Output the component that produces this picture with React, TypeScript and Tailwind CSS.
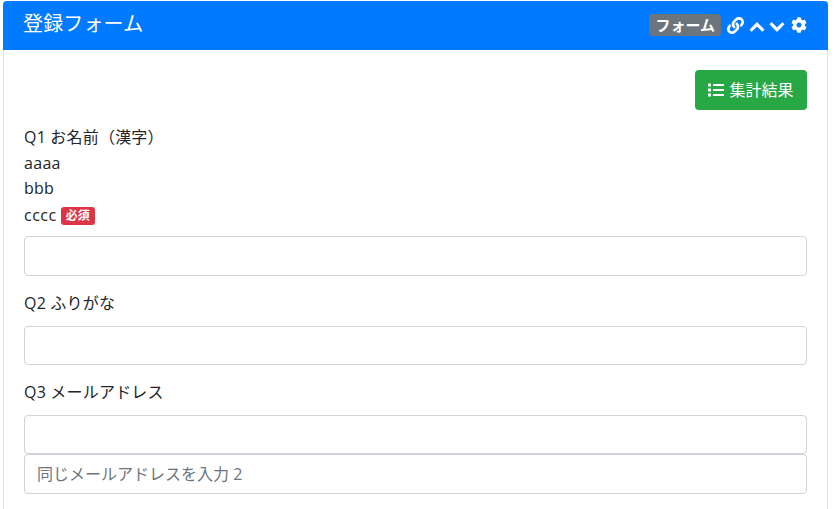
import { FaLink, FaChevronUp, FaChevronDown, FaCog, FaList } from "react-icons/fa";

const font = "font-['Open_Sans','Noto_Sans_CJK_JP',sans-serif]";
const inputCls =
  "block w-full rounded-[4px] border border-[#ced4da] bg-white px-3 text-[16px] text-[#495057] placeholder:text-[#6c757d] outline-none";

export default function App() {
  return (
    <div className={`${font} h-[509px] w-[836px] overflow-hidden bg-white pl-[3px] pt-[1px] text-[16px] text-[#212529]`}>
      <div className="h-[520px] w-[825px] rounded-t-[4px] border-x border-[#dfdfdf]">
        <div className="-mx-px flex h-[49px] items-center justify-between rounded-t-[4px] bg-[#007bff] pl-[20px] pr-[21px] text-white">
          <div className="pb-[3px] text-[20px] leading-[24px] tracking-[0.15px]">登録フォーム</div>
          <div className="flex items-center">
            <span className="mb-[2px] mr-[6px] rounded-[4px] bg-[#6c757d] px-[6px] py-[3px] text-[15px] font-bold leading-[16px]">フォーム</span>
            <FaLink size={17} className="mb-[1px] mr-[5px]" />
            <FaChevronUp size={16} stroke="currentColor" strokeWidth={30} className="mr-[4px] mt-[2px]" />
            <FaChevronDown size={16} stroke="currentColor" strokeWidth={30} className="mr-[6px] mt-[2px]" />
            <FaCog size={16} className="mb-[1px]" />
          </div>
        </div>
        <div className="px-[20px] pt-[20px]">
          <div className="flex justify-end">
            <button className="flex h-[40px] w-[112px] items-center justify-center gap-[5px] rounded-[4px] bg-[#28a745] text-white">
              <FaList size={16} />
              <span>集計結果</span>
            </button>
          </div>
          <div className="mt-[15px] leading-[25px] tracking-[0.2px]">
            <div className="h-[26px]">Q1 お名前（漢字）</div>
            <div className="tracking-[0.3px]">aaaa</div>
            <div>bbb</div>
            <div className="flex h-[27px] items-center pt-[2px] tracking-[0.5px]">
              cccc
              <span className="ml-[4px] rounded-[3px] bg-[#dc3545] px-[5px] py-[2px] text-[12px] font-bold leading-[14px] tracking-normal text-white">必須</span>
            </div>
          </div>
          <input className={`${inputCls} mt-[8px] h-[40px]`} />
          <div className="mt-[15px] leading-[25px] tracking-[0.2px]">Q2 ふりがな</div>
          <input className={`${inputCls} mt-[10px] h-[39px]`} />
          <div className="mt-[15px] leading-[25px] tracking-[0.2px]">Q3 メールアドレス</div>
          <input className={`${inputCls} mt-[10px] h-[39px]`} />
          <input className={`${inputCls} h-[40px]`} placeholder="同じメールアドレスを入力 2" />
        </div>
      </div>
    </div>
  );
}
